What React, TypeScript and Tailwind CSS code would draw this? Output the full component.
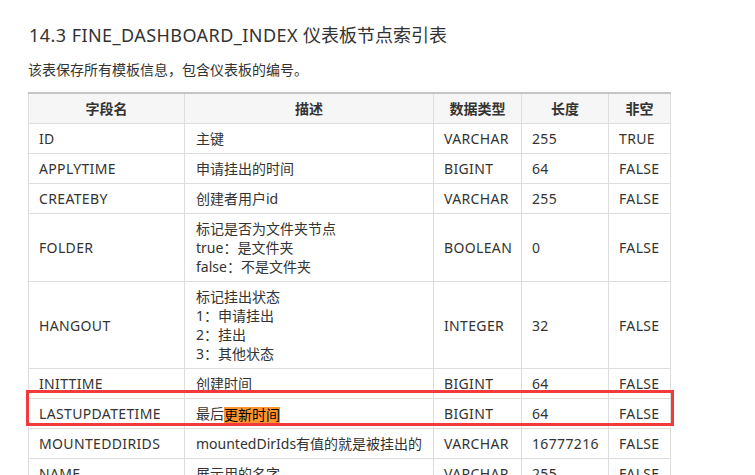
import React from "react";

type Row = { name: string; desc: React.ReactNode; type: string; len: string; nn: string };

const rows: Row[] = [
  { name: "ID", desc: "主键", type: "VARCHAR", len: "255", nn: "TRUE" },
  { name: "APPLYTIME", desc: "申请挂出的时间", type: "BIGINT", len: "64", nn: "FALSE" },
  { name: "CREATEBY", desc: "创建者用户id", type: "VARCHAR", len: "255", nn: "FALSE" },
  {
    name: "FOLDER",
    desc: (
      <>
        标记是否为文件夹节点
        <br />
        true：是文件夹
        <br />
        false：不是文件夹
      </>
    ),
    type: "BOOLEAN",
    len: "0",
    nn: "FALSE",
  },
  {
    name: "HANGOUT",
    desc: (
      <>
        标记挂出状态
        <br />
        1：申请挂出
        <br />
        2：挂出
        <br />
        3：其他状态
      </>
    ),
    type: "INTEGER",
    len: "32",
    nn: "FALSE",
  },
  { name: "INITTIME", desc: "创建时间", type: "BIGINT", len: "64", nn: "FALSE" },
  {
    name: "LASTUPDATETIME",
    desc: (
      <>
        最后
        <span className="inline-block h-[16px] bg-[#ff9632] align-middle leading-[16px] text-black">更新时间</span>
      </>
    ),
    type: "BIGINT",
    len: "64",
    nn: "FALSE",
  },
  { name: "MOUNTEDDIRIDS", desc: "mountedDirIds有值的就是被挂出的", type: "VARCHAR", len: "16777216", nn: "FALSE" },
  { name: "NAME", desc: "展示用的名字", type: "VARCHAR", len: "255", nn: "FALSE" },
];

const font = { fontFamily: '"Noto Sans", "Noto Sans CJK SC", sans-serif' };

export default function App() {
  const td = "border border-[#dddddd] px-[10px] py-[5px] align-middle";
  const tdL = td + " tracking-[0.35px]";
  const th = "border border-[#dddddd] border-t-2 border-t-[#c4c4c4] px-[10px] py-[5px] text-center font-bold";
  return (
    <div className="h-[475px] w-[755px] overflow-hidden bg-white text-[#333333]" style={font}>
      <div className="relative pl-[28px] pt-[21px]">
        <h1 className="ml-[1px] text-[18px] leading-[28px] font-normal text-[#333333]">
          <span className="tracking-[0.45px]">14.3 FINE_DASHBOARD_INDEX </span>仪表板节点索引表
        </h1>
        <p className="mt-[11px] text-[14px] leading-[20px]">该表保存所有模板信息，包含仪表板的编号。</p>
        <table className="mt-[12px] w-[642px] table-fixed border-collapse border-t-2 border-t-[#c4c4c4] text-[14px] leading-[19px]">
          <colgroup>
            <col className="w-[156px]" />
            <col className="w-[249px]" />
            <col className="w-[88px]" />
            <col className="w-[87px]" />
            <col className="w-[62px]" />
          </colgroup>
          <thead>
            <tr className="bg-[#f6f6f6]">
              <th className={th}>字段名</th>
              <th className={th}>描述</th>
              <th className={th}>数据类型</th>
              <th className={th}>长度</th>
              <th className={th}>非空</th>
            </tr>
          </thead>
          <tbody>
            {rows.map((r) => (
              <tr key={r.name}>
                <td className={tdL}>{r.name}</td>
                <td className={td + " whitespace-nowrap pl-[11px] pr-[2px]"}>{r.desc}</td>
                <td className={tdL}>{r.type}</td>
                <td className={tdL}>{r.len}</td>
                <td className={tdL}>{r.nn}</td>
              </tr>
            ))}
          </tbody>
        </table>
        <div className="pointer-events-none absolute left-[26px] top-[390px] h-[36px] w-[648px] border-[3px] border-[#f23a3a]" />
      </div>
    </div>
  );
}
